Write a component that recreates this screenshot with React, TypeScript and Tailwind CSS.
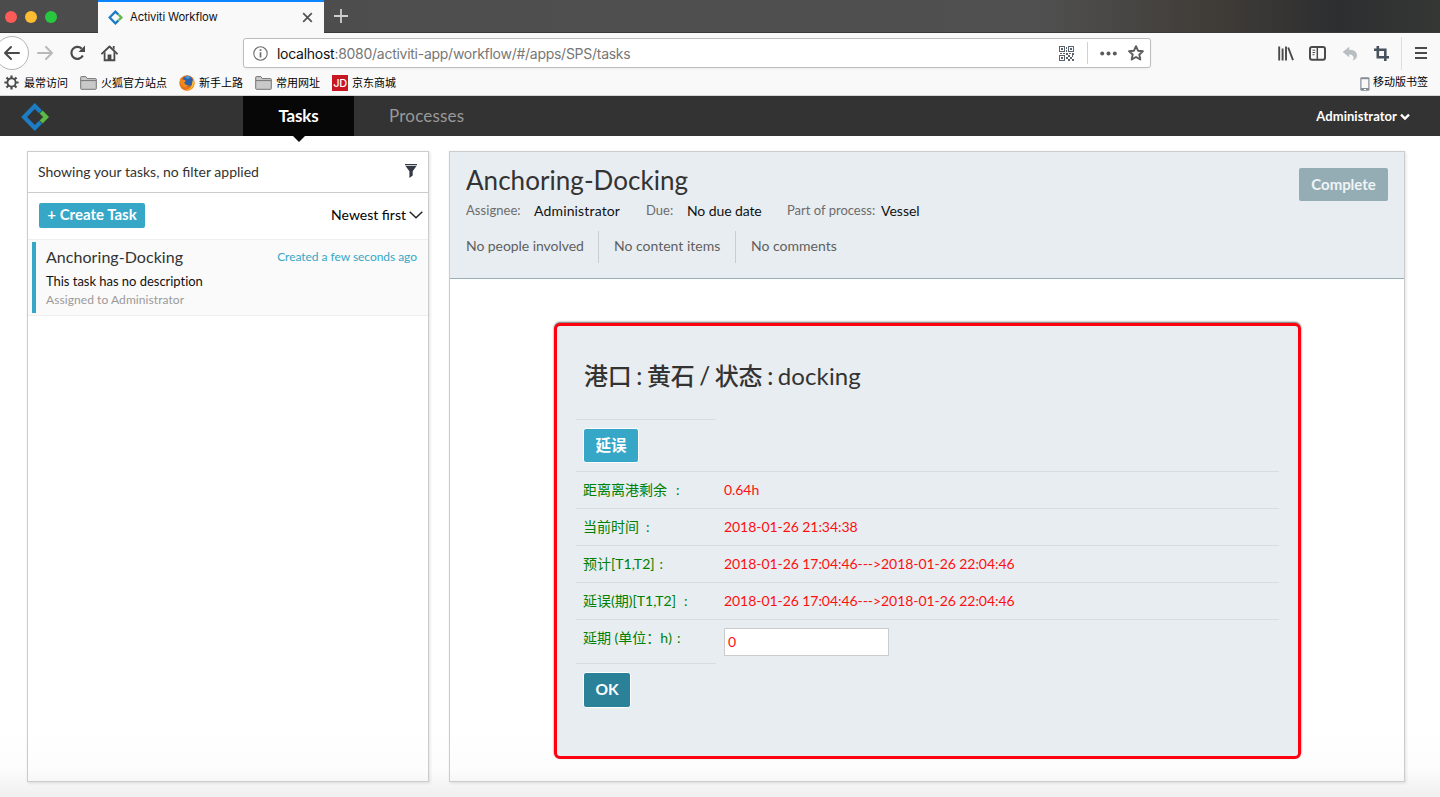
import React from "react";

const LATO = "font-['Lato','Noto_Sans_CJK_SC',sans-serif]";
const SYS = "font-['Inter','Noto_Sans_CJK_SC',sans-serif]";

function Logo({ size }: { size: number }) {
  return (
    <svg width={size} height={size} viewBox="0 0 27 27" fill="none" className="block shrink-0">
      <path d="M18.8 8.4 13.3 2.9 3 13.5 13.3 24.1 18.8 18.6" stroke="#1c7cc4" strokeWidth="4.1" />
      <path d="M19.4 8.7 24.2 13.5 19.4 18.3" stroke="#5cb946" strokeWidth="4.1" />
    </svg>
  );
}

function BackIcon() {
  return (
    <svg width="18" height="16" viewBox="0 0 18 16" fill="none" stroke="currentColor" strokeWidth="2" strokeLinecap="round" strokeLinejoin="round" className="block">
      <path d="M16 8H2M8 2 2 8l6 6" />
    </svg>
  );
}

function Folder() {
  return (
    <svg width="17" height="14" viewBox="0 0 17 14" className="mt-px block shrink-0" fill="#c9c9c9" stroke="#757575">
      <path d="M.7 12.5V1.3Q.7.6 1.4.6H5.8L7.3 2.6H15.6Q16.3 2.6 16.3 3.3V12.5Q16.3 13.3 15.6 13.3H1.4Q.7 13.3.7 12.5Z" />
      <path d="M1 4.6H16" fill="none" />
    </svg>
  );
}

function Gear() {
  return (
    <svg width="15" height="15" viewBox="0 0 15 15" fill="none" stroke="#4a4a4a" className="block shrink-0">
      <circle cx="7.5" cy="7.5" r="4.1" strokeWidth="1.8" />
      <path strokeWidth="2.2" d="M7.5.4V3M7.5 12v2.6M.4 7.5H3M12 7.5h2.6M2.5 2.5l1.8 1.8M10.7 10.7l1.8 1.8M2.5 12.5l1.8-1.8M10.7 4.3l1.8-1.8" />
    </svg>
  );
}

function Firefox() {
  return (
    <svg width="16" height="16" viewBox="0 0 16 16" className="block shrink-0">
      <circle cx="8" cy="8" r="7.7" fill="#e8741a" />
      <circle cx="8.6" cy="6.2" r="5.4" fill="#2c5fa8" />
      <path d="M6 1.3Q9-.1 12 2L9 4.2 6.5 3Z" fill="#4b93cf" />
      <path d="M.7 3.2 3.3 4.6Q5.8 4 6.8 6L5.2 7.8Q6.2 10.6 9.4 10.2L10.6 9Q9.6 12 6.8 12.3 1.4 12 .7 3.2Z" fill="#f08a1d" />
      <path d="M14.2 4.2Q15.8 7 14.6 10.6 12 15.8 7 15 12.4 13.6 13 9.5 13.2 6.5 14.2 4.2Z" fill="#fbc22d" />
    </svg>
  );
}

function Qr() {
  return (
    <svg width="15" height="15" viewBox="0 0 15 15" className="block" fill="#59636e">
      <path fillRule="evenodd" d="M0 0H6V6H0ZM1 1V5H5V1ZM9 0H15V6H9ZM10 1V5H14V1ZM0 9H6V15H0ZM1 10V14H5V10Z" />
      <path d="M2 2H4V4H2ZM11 2H13V4H11ZM2 11H4V13H2ZM7 1H8V3H7ZM7 4H8V6H7ZM1 7H3V8H1ZM4 7H6V8H4ZM7 7H9V9H7ZM10 7H12V8H10ZM13 7H15V9H13ZM9 9H11V11H9ZM11 11H13V13H11ZM13 9H14V11H13ZM7 11H9V13H7ZM9 13H11V15H9ZM13 13H15V15H13Z" />
    </svg>
  );
}

function Row({ label, value, gap }: { label: string; value: string; gap?: string }) {
  return (
    <div className="flex h-[37px] border-t border-[#d8dcdf] pl-[7px] text-[14px] leading-5">
      <div className="w-[141px] shrink-0 whitespace-pre pt-2 text-[#008000]">
        {label}
        <span className={gap}>:</span>
      </div>
      <div className="whitespace-pre pt-2 tracking-[-0.06px] text-[#ff1010]">{value}</div>
    </div>
  );
}

function Browser() {
  return (
    <div className={`${SYS} flex h-24 flex-col bg-[#f9f9fa]`}>
      <div className="flex h-[33px] border-b border-[#3a3a3a] bg-[linear-gradient(90deg,#4c4c4c_0%,#505050_72%,#403d38_84%,#2d2e30_93%,#353735_100%)]">
        <div className="flex w-[98px] shrink-0 items-center gap-2 pl-[5px] pt-px">
          <span className="size-3 rounded-full bg-[#fc5b57]" />
          <span className="size-3 rounded-full bg-[#fdbc31]" />
          <span className="size-3 rounded-full bg-[#27c840]" />
        </div>
        <div className="flex h-[33px] w-[226px] items-center border-t-2 border-[#0a84ff] bg-[#f9f9fa] pl-[10px] pr-[11px]">
          <div className="pb-px"><Logo size={15} /></div>
          <span className="ml-[7px] flex-1 whitespace-nowrap text-[11.3px] tracking-[-0.15px] text-[#111]">Activiti Workflow</span>
          <svg width="11" height="11" viewBox="0 0 12 12" stroke="#555" strokeWidth="1.9" className="mb-px block"><path d="M1.3 1.3 10.7 10.7M10.7 1.3 1.3 10.7" /></svg>
        </div>
        <svg width="16" height="16" viewBox="0 0 16 16" stroke="#cfcfcf" strokeWidth="1.8" className="ml-[9px] mt-2 block"><path d="M8 1V15M1 8H15" /></svg>
      </div>
      <div className="flex h-[40px] items-center text-[#4a4a4a]">
        <div className="-ml-[5px] flex size-[34px] shrink-0 items-center justify-center rounded-full border border-[#b5b5b6] bg-white"><BackIcon /></div>
        <div className="ml-[7px] rotate-180 text-[#b9b9ba]"><BackIcon /></div>
        <svg width="17" height="16" viewBox="0 0 17 16" fill="none" stroke="currentColor" strokeWidth="2.2" className="ml-[15px] block">
          <path d="M13.8 10.5A6 6 0 1 1 12.6 3.6" /><path d="M16 .5V7H9.5Z" fill="currentColor" stroke="none" />
        </svg>
        <svg width="17" height="17" viewBox="0 0 17 17" className="ml-[15px] block" fill="currentColor">
          <path d="M1 8.6 8.5 1.5 16 8.6" fill="none" stroke="currentColor" strokeWidth="1.9" strokeLinecap="round" strokeLinejoin="round" />
          <path d="M11.8 1H13.6V4.8L11.8 3Z" />
          <path fillRule="evenodd" d="M2.7 8.3 4.5 6.6V14.3H6.6V9.5H10.4V14.3H12.5V6.6L14.3 8.3V16.2H2.7Z" />
          <path d="M7.6 10.6H9.4V14.4H7.6Z" />
        </svg>
        <div className="ml-[125px] flex h-[30px] w-[908px] items-center rounded-[3px] border border-[#bdbdbe] bg-white pl-[9px] pr-[6px] shadow-[0_1px_3px_rgba(0,0,0,0.05)]">
          <svg width="15" height="15" viewBox="0 0 15 15" className="block" fill="none" stroke="#6d6d6e"><circle cx="7.5" cy="7.5" r="6.7" strokeWidth="1.1" /><path d="M7.5 3.2V4.9M7.5 6.3V11.5" strokeWidth="1.7" /></svg>
          <span className="ml-[9px] flex-1 whitespace-nowrap pt-px text-[14px] tracking-[-0.27px] text-[#777]"><span className="text-[#111]">localhost</span>:8080/activiti-app/workflow/#/apps/SPS/tasks</span>
          <Qr />
          <span className="ml-[13px] h-[22px] w-px bg-[#d0d0d1]" />
          <svg width="17" height="5" viewBox="0 0 17 5" className="ml-[12px] block" fill="#5b5b5c"><circle cx="2.2" cy="2.5" r="2" /><circle cx="8.5" cy="2.5" r="2" /><circle cx="14.8" cy="2.5" r="2" /></svg>
          <svg width="16" height="16" viewBox="0 0 16 16" className="ml-[11px] block" fill="none" stroke="#5b5b5c" strokeWidth="1.9" strokeLinejoin="round"><path d="M8 1.2 10 5.7 14.9 6.2 11.3 9.5 12.3 14.5 8 12 3.7 14.5 4.7 9.5 1.1 6.2 6 5.7Z" /></svg>
        </div>
        <svg width="16" height="15" viewBox="0 0 16 15" className="ml-[127px] block" stroke="#4a4a4a" strokeWidth="1.9"><path d="M1.2.5V14.5M4.6 2.5V14.5M8 .5V14.5M10.2 1.5 15 14.2" /></svg>
        <svg width="17" height="15" viewBox="0 0 17 15" className="ml-[15px] block" fill="none" stroke="#4a4a4a"><rect x="1" y="1" width="15" height="12.8" rx="2" strokeWidth="2" /><path d="M8.3 1V14" strokeWidth="1.5" /><path d="M3.5 4.2H6.2M3.5 6.5H6.2M3.5 8.7H5.5" /></svg>
        <svg width="16" height="15" viewBox="0 0 16 15" className="ml-[16px] block" fill="#b9bec3"><path d="M7.2.8V3.8Q15 3.8 15 9.5 15 13.2 10.5 14.5 12 12.8 11.5 10.7 10.5 8.2 7.2 8.2V11.2L.7 6Z" /></svg>
        <svg width="15" height="15" viewBox="0 0 15 15" className="ml-[16px] block" fill="none" stroke="#47525d" strokeWidth="2.6"><path d="M0 3.8H11.3V15M3.8 0V11.2H15" /></svg>
        <span className="ml-3 h-[33px] w-px bg-[#dededf]" />
        <svg width="12" height="12" viewBox="0 0 12 12" className="ml-[13px] block" stroke="#4a4a4a" strokeWidth="1.9"><path d="M0 1H12M0 6H12M0 11H12" /></svg>
      </div>
      <div className="flex h-[23px] items-center border-b border-[#d5d5d6] pb-[3px] pl-[4px] pr-[12px] text-[11px] leading-none text-black">
        <Gear /><span className="ml-[5px] w-[56px] pt-px">最常访问</span>
        <Folder /><span className="ml-[4px] w-[78px] whitespace-nowrap pt-px">火狐官方站点</span>
        <Firefox /><span className="ml-[4px] w-[56px] pt-px">新手上路</span>
        <Folder /><span className="ml-[4px] w-[56px] pt-px">常用网址</span>
        <span className="flex size-4 items-center justify-center bg-[#c91623] pt-px text-[11px] font-medium tracking-[-0.4px] text-white">JD</span>
        <span className="ml-[4px] flex-1 pt-px">京东商城</span>
        <svg width="10" height="14" viewBox="0 0 10 14" className="mt-0.5 block"><rect x=".3" y=".2" width="9.2" height="13.6" rx="1.4" fill="#858c93" /><path d="M1.5 2.2H8.3V11H1.5Z" fill="#f9f9fa" /><path d="M4 12H6V13H4Z" fill="#fff" /></svg>
        <span className="ml-[3px]">移动版书签</span>
      </div>
    </div>
  );
}

export default function App() {
  return (
    <div className={`${LATO} flex h-[797px] w-[1440px] flex-col overflow-hidden bg-white`}>
      <Browser />
      <nav className="flex h-10 shrink-0 items-center bg-[#333] pl-[21px] pr-[30px]">
        <div className="pt-0.5"><Logo size={28} /></div>
        <div className="relative ml-[194px] flex h-10 w-[111px] items-center justify-center bg-[#070707] text-[17px] font-bold tracking-[-0.2px] text-white">
          Tasks
          <svg width="12" height="6" viewBox="0 0 12 6" className="absolute left-[50px] top-10 block"><path d="M0 0H12L6 6Z" fill="#070707" /></svg>
        </div>
        <span className="ml-[35px] flex-1 text-[17px] tracking-[0.2px] text-[#999]">Processes</span>
        <span className="pt-px text-[13px] font-bold tracking-[0.05px] text-white">Administrator</span>
        <svg width="10" height="8" viewBox="0 0 10 8" fill="none" stroke="#fff" strokeWidth="2.4" className="ml-[3px] mt-px block"><path d="M1 1.7 5 5.5 9 1.7" /></svg>
      </nav>
      <main className="flex flex-1 gap-5 bg-[linear-gradient(180deg,#fff_0%,#fff_90%,#fcfcfc_96%,#efefef_100%)] pl-[27px] pt-[15px]">
        <section className="h-[631px] w-[402px] shrink-0 border border-[#ccc] shadow-[1px_1px_3px_rgba(0,0,0,0.12)]">
          <div className="flex h-[41px] items-center justify-between border-b border-[#ccc] pl-[10px] pr-[11px] text-[14px] text-[#333]">
            <span className="pb-0.5">Showing your tasks, no filter applied</span>
            <svg width="12" height="14" viewBox="0 0 12 14" className="mb-0.5 block" fill="#333a45"><path d="M0 0H12V1.2H0ZM.5 2H11.5L7.7 7.2V11.5L4.4 14V7.2Z" /></svg>
          </div>
          <div className="flex h-[46px] items-center justify-between pb-0.5 pl-[11px] pr-[5px]">
            <button className="h-[25px] w-[106px] rounded-[2px] bg-[#36a7c7] pb-px text-[15px] font-bold leading-none text-white">+ Create Task</button>
            <span className="flex items-center gap-[3px] pb-px text-[14px] text-black">Newest first
              <svg width="14" height="8" viewBox="0 0 14 8" fill="none" stroke="#222" strokeWidth="1.4" className="block"><path d="M.7.7 7 6.8 13.3.7" /></svg>
            </span>
          </div>
          <div className="flex h-[77px] border-y border-[#eee] bg-[#fafafa] py-[2px] pl-1">
            <div className="w-1 bg-[#36a7c7]" />
            <div className="flex-1 pl-[10px] pr-[11px] pt-[2px]">
              <div className="flex items-center justify-between leading-6">
                <span className="text-[16px] tracking-[0.05px] text-[#333]">Anchoring-Docking</span>
                <span className="pt-px text-[12px] tracking-[-0.04px] text-[#36a7c7]">Created a few seconds ago</span>
              </div>
              <div className="text-[13px] leading-[24px] tracking-[-0.03px] text-[#111]">This task has no description</div>
              <div className="text-[12px] leading-[14px] tracking-[0.07px] text-[#999]">Assigned to Administrator</div>
            </div>
          </div>
        </section>
        <section className="h-[631px] w-[956px] border border-[#ccc] shadow-[1px_1px_3px_rgba(0,0,0,0.12)]">
          <header className="h-[127px] border-b border-[#9badb9] bg-[#e8edf1] pl-[16px] pr-4">
            <div className="flex h-[50px] justify-between">
              <h1 className="pt-[10px] text-[26px] leading-9 tracking-[0.05px] text-[#333]">Anchoring-Docking</h1>
              <button className="mt-4 h-[33px] w-[89px] rounded-[2px] bg-[#94adb5] text-[15px] font-bold tracking-[-0.05px] text-[#f0f4f5]">Complete</button>
            </div>
            <div className="flex h-[17px] items-center whitespace-nowrap text-[14px] text-[#111]">
              <span className="w-[68px] pt-px text-[13px] tracking-[0.05px] text-[#6c6c6c]">Assignee:</span><span className="w-[112px] tracking-[0.15px]">Administrator</span>
              <span className="w-[41px] pt-px text-[13px] text-[#6c6c6c]">Due:</span><span className="w-[100px] tracking-[-0.1px]">No due date</span>
              <span className="w-[94px] pt-px text-[13px] text-[#6c6c6c]">Part of process:</span><span>Vessel</span>
            </div>
            <div className="mt-[12px] flex h-8 items-center text-[14px] text-[#5f5f5f]">
              <span className="w-[132px] pb-[3px] tracking-[-0.06px]">No people involved</span>
              <span className="flex h-8 w-[137px] items-center border-l border-[#ccc] pb-[3px] pl-[15px]">No content items</span>
              <span className="flex h-8 items-center border-l border-[#ccc] pb-[3px] pl-[15px]">No comments</span>
            </div>
          </header>
          <div className="ml-[104px] mt-[44px] h-[436px] w-[747px] rounded-[6px] border-[3px] border-[#ff0011] bg-[#e8edf1] pl-[19px] pr-[19px] shadow-[0_-1px_2px_rgba(0,0,0,0.6)]">
            <h2 className="h-[93px] pl-2 pt-[32px] text-[24px] font-medium leading-9 tracking-[-0.2px] text-[#333] [word-spacing:-1.1px]">港口 : 黄石 / 状态 : <span className="font-normal tracking-[0.1px]">docking</span></h2>
            <div className="h-[52px] w-[140px] border-t border-[#d8dcdf] pl-[7px] pt-[8px]">
              <button className="h-[35px] w-[56px] rounded-[3px] border border-white bg-[#36a7c7] pt-px text-[15.5px] font-bold text-white">延误</button>
            </div>
            <Row label="距离离港剩余" value="0.64h" gap="ml-[9px]" />
            <Row label="当前时间" value="2018-01-26 21:34:38" gap="ml-[7px]" />
            <Row label="预计[T1,T2]" value="2018-01-26 17:04:46--->2018-01-26 22:04:46" gap="ml-[5px]" />
            <Row label="延误(期)[T1,T2]" value="2018-01-26 17:04:46--->2018-01-26 22:04:46" gap="ml-[8px]" />
            <div className="flex h-[44px] border-t border-[#d8dcdf] pl-[7px] text-[14px] leading-5">
              <div className="w-[141px] whitespace-nowrap pt-2 text-[#008000]">延期 (单位：h)<span className="ml-[5px]">:</span></div>
              <div className="mt-2 h-7 w-[165px] border border-[#ccc] bg-white pl-[3px] pt-[3px] text-[14px] text-[#ff1010]">0</div>
            </div>
            <div className="w-[140px] border-t border-[#d8dcdf] pl-[7px] pt-[8px]">
              <button className="h-[36px] w-[48px] rounded-[3px] border border-white bg-[#2a8198] pb-px text-[15.5px] font-bold text-white">OK</button>
            </div>
          </div>
        </section>
      </main>
    </div>
  );
}
